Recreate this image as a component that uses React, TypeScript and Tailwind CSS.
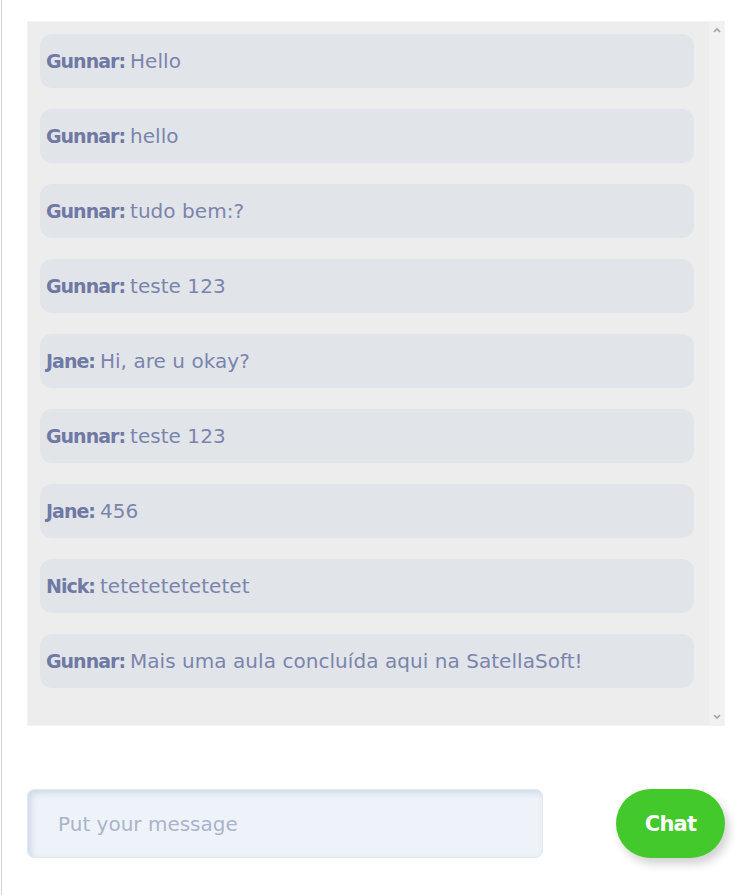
import React from "react";

const MESSAGES = [
  { name: "Gunnar", text: "Hello" },
  { name: "Gunnar", text: "hello" },
  { name: "Gunnar", text: "tudo bem:?" },
  { name: "Gunnar", text: "teste 123" },
  { name: "Jane", text: "Hi, are u okay?" },
  { name: "Gunnar", text: "teste 123" },
  { name: "Jane", text: "456" },
  { name: "Nick", text: "tetetetetetetet" },
  { name: "Gunnar", text: "Mais uma aula concluída aqui na SatellaSoft!" },
];

const App = () => {
  return (
    <div className="w-[750px] h-[895px] bg-white relative font-['DejaVu_Sans',sans-serif]">
      <div className="absolute left-[1px] top-0 bottom-0 w-px bg-[#d4d4d4]"></div>
      <div className="pl-[27px] pr-[25px] pt-[21px]">
        <div className="h-[705px] bg-[#ededed] border border-[#f3f3f3] flex">
          <div className="flex-1 pt-[12px] pl-[12px] pr-[15px] flex flex-col gap-[21px]">
            {MESSAGES.map((m, idx) => (
              <div key={idx} className="h-[54px] rounded-[12px] bg-[#e1e5ea] flex items-center pl-[6px] text-[20px] text-[#7b84ac] tracking-[0.05px]">
                <span className="font-bold text-[19px] text-[#7079a3] mr-[5px] tracking-[-1px]">{m.name}:</span>
                <span>{m.text}</span>
              </div>
            ))}
          </div>
          <div className="w-[15px] bg-[#f1f1f1] flex flex-col justify-between items-center py-[3px] text-[#a3a3a3]">
            <svg width="8" height="6" viewBox="0 0 8 6" className="mt-[2px]">
              <path d="M1 5 L4 2 L7 5" fill="none" stroke="currentColor" strokeWidth="1.6" />
            </svg>
            <svg width="8" height="6" viewBox="0 0 8 6" className="mb-[2px]">
              <path d="M1 1 L4 4 L7 1" fill="none" stroke="currentColor" strokeWidth="1.6" />
            </svg>
          </div>
        </div>

        <div className="flex items-center justify-between mt-[63px]">
          <input
            placeholder="Put your message"
            className="w-[516px] h-[69px] rounded-[7px] bg-[#eef3f9] pl-[30px] text-[20px] text-[#7b84ac] placeholder:text-[#aab3cb] outline-none shadow-[inset_3px_3px_6px_rgba(170,185,210,0.45)] border border-[#e3e9f1]"
          />
          <button className="w-[109px] h-[69px] rounded-full bg-[#43c92b] text-white text-[21px] font-bold tracking-[-0.8px] pt-[2px] shadow-[4px_6px_10px_rgba(0,0,0,0.18)]">
            Chat
          </button>
        </div>
      </div>
    </div>
  );
};

export default App;
